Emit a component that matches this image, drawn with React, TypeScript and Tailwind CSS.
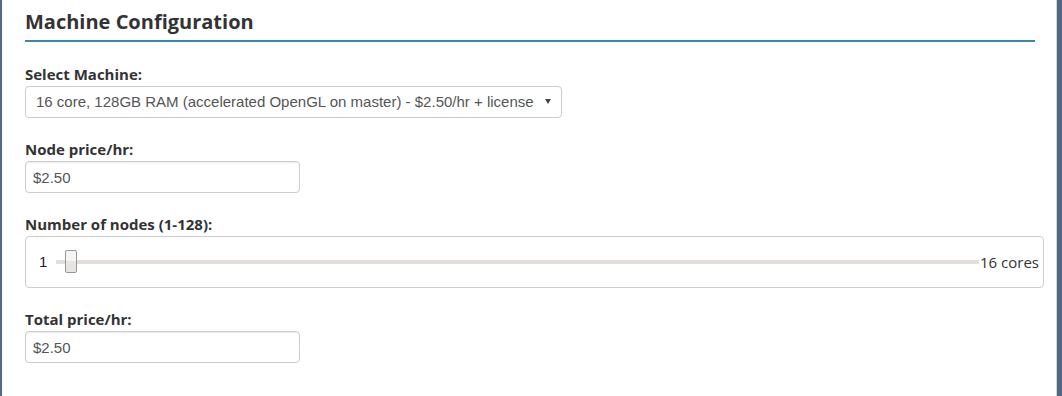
import React from 'react';

const labelFont = { fontFamily: '"Open Sans", "Liberation Sans", sans-serif' };
const fieldFont = { fontFamily: '"Liberation Sans", Arial, sans-serif' };

const FieldLabel = ({ children }: { children: React.ReactNode }) => (
  <label
    style={labelFont}
    className="block text-[15px] leading-[21px] font-bold text-[#333] mb-px"
  >
    {children}
  </label>
);

const PriceInput = ({ value }: { value: string }) => (
  <input
    type="text"
    readOnly
    value={value}
    style={fieldFont}
    className="block w-[275px] h-[32px] px-[7px] text-[15px] text-[#555] bg-white border border-[#ccc] rounded-[4px] shadow-[inset_0_1px_1px_rgba(0,0,0,0.075)] outline-none"
  />
);

export default function App() {
  return (
    <div className="flex w-[1062px] h-[396px] bg-white overflow-hidden">
      <div className="w-[2px] bg-[#4f6a86]" />
      <div className="flex-1 pl-[23px] pr-[12px] pt-[11px]">
        <h2
          style={labelFont}
          className="mr-[9px] pb-[7px] text-[20px] leading-[22px] font-bold text-[#333] border-b-2 border-[#3a87ad]"
        >
          Machine Configuration
        </h2>

        <div className="mt-[22px] flex flex-col gap-[21px]">
          <div>
            <FieldLabel>Select Machine:</FieldLabel>
            <div
              style={fieldFont}
              className="flex items-center justify-between w-[537px] h-[32px] pl-[10px] pr-[10px] text-[15px] text-[#555] bg-white border border-[#ccc] rounded-[4px]"
            >
              <span>16 core, 128GB RAM (accelerated OpenGL on master) - $2.50/hr + license</span>
              <svg width="6" height="5" viewBox="0 0 6 5" className="mt-[-1px]">
                <path d="M0 0 L6 0 L3 5 Z" fill="#444" />
              </svg>
            </div>
          </div>

          <div>
            <FieldLabel>Node price/hr:</FieldLabel>
            <PriceInput value="$2.50" />
          </div>

          <div>
            <FieldLabel>Number of nodes (1-128):</FieldLabel>
            <div className="flex items-center h-[52px] pl-[13px] pr-[4px] border border-[#ccc] rounded-[4px]">
              <span style={fieldFont} className="w-[17px] text-[15px] text-[#222]">
                1
              </span>
              <div className="relative flex-1 h-[4px] bg-[#e2dfdb]">
                <div className="absolute left-[9px] top-[-10px] w-[12px] h-[23px] border border-[#9a9590] rounded-[2px] bg-gradient-to-b from-[#f6f5f3] from-50% to-[#e8e5e1] to-50%" />
              </div>
              <span style={labelFont} className="ml-[1px] text-[15px] text-[#333]">
                16 cores
              </span>
            </div>
          </div>

          <div>
            <FieldLabel>Total price/hr:</FieldLabel>
            <PriceInput value="$2.50" />
          </div>
        </div>
      </div>
      <div className="w-px bg-[#d6d6d6]" />
      <div className="w-[5px] bg-[#4f6a86]" />
    </div>
  );
}
